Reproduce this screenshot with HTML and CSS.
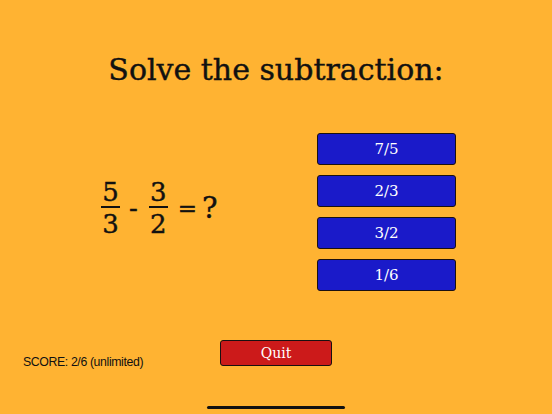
FILE: index.html
```html
<!DOCTYPE html>
<html>
<head>
<meta charset="utf-8">
<link rel="stylesheet" href="styles.css">
</head>
<body>
<div class="screen">
  <h1 class="title">Solve the subtraction:</h1>
  <div class="main">
    <div class="equation">
      <div class="frac"><span class="num">5</span><span class="bar"></span><span class="den">3</span></div>
      <span class="op minus">-</span>
      <div class="frac"><span class="num">3</span><span class="bar"></span><span class="den">2</span></div>
      <span class="op eq">=</span>
      <span class="op q">?</span>
    </div>
    <div class="answers">
      <button class="answer">7/5</button>
      <button class="answer">2/3</button>
      <button class="answer">3/2</button>
      <button class="answer">1/6</button>
    </div>
  </div>
  <div class="footer">
    <div class="score">SCORE: 2/6 (unlimited)</div>
    <button class="quit">Quit</button>
    <div></div>
  </div>
  <div class="home"></div>
</div>
</body>
</html>
```
FILE: styles.css
```css
html, body {
  margin: 0;
  padding: 0;
}
body {
  background: #FFB332;
  width: 552px;
  height: 414px;
  overflow: hidden;
}
.screen {
  width: 552px;
  height: 414px;
  display: flex;
  flex-direction: column;
  font-family: "DejaVu Serif", serif;
  color: #111;
}
.title {
  margin: 50px 0 0 0;
  font-weight: normal;
  font-size: 30px;
  line-height: 40px;
  text-align: center;
  -webkit-text-stroke: 0.4px #111;
}
.main {
  display: flex;
  margin-top: 43px;
  height: 158px;
}
.equation {
  width: 317px;
  display: flex;
  align-items: center;
  padding-left: 101px;
  padding-bottom: 8px;
  box-sizing: border-box;
  font-size: 26px;
  -webkit-text-stroke: 0.4px #111;
}
.frac {
  display: flex;
  flex-direction: column;
  align-items: center;
  width: 19px;
}
.frac .num, .frac .den {
  line-height: 26px;
}
.frac .bar {
  display: block;
  width: 19px;
  height: 2px;
  background: #111;
  margin: 1px 0 3px 0;
}
.op {
  line-height: 30px;
}
.minus {
  margin: 0 11px 0 9px;
}
.eq {
  margin-left: 10px;
  font-size: 23px;
}
.q {
  margin-left: 5px;
  font-size: 29px;
}
.answers {
  display: flex;
  flex-direction: column;
  gap: 10px;
  width: 139px;
}
.answer {
  height: 32px;
  margin: 0;
  padding: 0;
  background: #1A1AC9;
  border: 1.5px solid #1a1010;
  border-radius: 3px;
  color: #fff;
  font-family: "DejaVu Serif", serif;
  font-size: 15px;
}
.footer {
  display: grid;
  grid-template-columns: 1fr 112px 1fr;
  margin-top: 49px;
}
.score {
  align-self: end;
  padding-left: 23px;
  font-family: "Liberation Sans", Arial, sans-serif;
  font-size: 12.3px;
  letter-spacing: -0.38px;
  line-height: 14px;
  margin-bottom: -3px;
}
.quit {
  height: 26px;
  margin: 0;
  padding: 0;
  background: #CC1A1A;
  border: 1.5px solid #1a1010;
  border-radius: 3px;
  color: #fff;
  font-family: "DejaVu Serif", serif;
  font-size: 14px;
}
.home {
  width: 138px;
  height: 3px;
  background: #111;
  border-radius: 2px;
  margin: 40px auto 0 auto;
}
```
